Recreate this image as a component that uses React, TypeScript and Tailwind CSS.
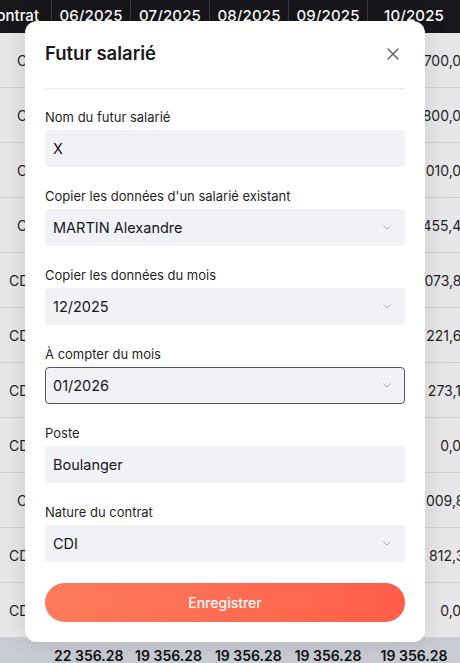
import React from "react";

const leftCells = ["CDD", "CDD", "CDD", "CDD", "CDI", "CDI", "CDI", "CDI", "CDD", "CDI", "CDI"];
const rightCells = ["1 700,00", "1 800,00", "2 010,00", "1 455,48", "2 073,82", "2 221,63", "2 273,14", "0,00", "2 009,81", "1 812,31", "0,00"];
const months = ["06/2025", "07/2025", "08/2025", "09/2025"];

function Chevron() {
  return (
    <svg width="8" height="5" viewBox="0 0 8 5" fill="none" className="shrink-0">
      <path d="M0.75 0.75l3.25 3.25 3.25-3.25" stroke="#aeaeb3" strokeWidth="1" strokeLinecap="round" strokeLinejoin="round" />
    </svg>
  );
}

function Field({ label, value, select, active }: { label: string; value: string; select?: boolean; active?: boolean }) {
  return (
    <div className="flex flex-col gap-[5px]">
      <div className="text-[13px] leading-4 text-[#1f1f24]">{label}</div>
      <div
        className={
          active
            ? "flex h-[37px] items-center justify-between rounded-[4px] border border-[#55565c] bg-[#f1f2f6] pl-[7px] pr-[13px]"
            : "flex h-[37px] items-center justify-between rounded-[4px] bg-[#f1f2f6] pl-2 pr-[14px]"
        }
      >
        <span className="text-[14.5px] text-[#16161a]">{value}</span>
        {select ? <Chevron /> : null}
      </div>
    </div>
  );
}

export default function App() {
  return (
    <div className="relative h-[663px] w-[460px] overflow-hidden bg-[#e7e7e9] font-['Inter',sans-serif]">
      <div className="flex h-[33px] bg-[#17171b] text-[15px] font-medium text-white">
        <div className="flex w-[52px] items-center justify-end pr-3 border-r border-[#3a3a40]">
          <span className="whitespace-nowrap">Contrat</span>
        </div>
        {months.map((m) => (
          <div key={m} className="flex w-[85px] items-center justify-center border-r border-[#3a3a40] tracking-[0.01em]">
            {m}
          </div>
        ))}
        <div className="flex w-[92px] shrink-0 items-center justify-center tracking-[0.01em]">10/2025</div>
      </div>
      <div className="flex flex-col">
        {leftCells.map((c, i) => (
          <div key={i} className="flex h-[55px] border-b border-[#cdcfda] text-[14px] text-[#1f1f24]">
            <div className={c === "CDI" ? "flex w-[52px] items-center pl-[9px]" : "flex w-[52px] items-center pl-[17px]"}>{c}</div>
            <div className="flex-1" />
            <div className="flex w-[96px] shrink-0 items-center justify-end whitespace-nowrap -mr-[10px]">{rightCells[i]}</div>
          </div>
        ))}
      </div>
      <div className="flex h-[25px] bg-[#c9cbd3] text-[14px] font-semibold text-[#111]">
        <div className="w-[52px]" />
        {["22 356.28", "19 356.28", "19 356.28", "19 356.28"].map((v, i) => (
          <div key={i} className="flex w-[85px] items-center justify-center whitespace-nowrap pt-[10px]">
            {v}
          </div>
        ))}
        <div className="flex w-[92px] shrink-0 items-center justify-center whitespace-nowrap pt-[10px]">19 356.28</div>
      </div>

      <div className="absolute left-[25px] top-[21px] w-[400px] rounded-[12px] bg-white px-5 pb-5 pt-[21px] shadow-[0_0_24px_rgba(0,0,0,0.12)]">
        <div className="flex h-6 items-center justify-between">
          <h2 className="text-[18.5px] font-semibold text-[#1a1a1f]">Futur salarié</h2>
          <svg width="12" height="12" viewBox="0 0 12 12" className="mr-[6px]">
            <path d="M1 1l10 10M11 1L1 11" stroke="#5a5a60" strokeWidth="1.4" strokeLinecap="round" />
          </svg>
        </div>
        <div className="mt-[22px] h-px bg-[#ececef]" />
        <div className="mt-[20px] flex flex-col gap-[21px]">
          <Field label="Nom du futur salarié" value="X" />
          <Field label="Copier les données d'un salarié existant" value="MARTIN Alexandre" select />
          <Field label="Copier les données du mois" value="12/2025" select />
          <Field label="À compter du mois" value="01/2026" select active />
          <Field label="Poste" value="Boulanger" />
          <Field label="Nature du contrat" value="CDI" select />
          <button className="h-[39px] w-full rounded-full bg-gradient-to-r from-[#ff7b5b] to-[#ff5e49] text-[14px] font-medium text-white">
            Enregistrer
          </button>
        </div>
      </div>
    </div>
  );
}
